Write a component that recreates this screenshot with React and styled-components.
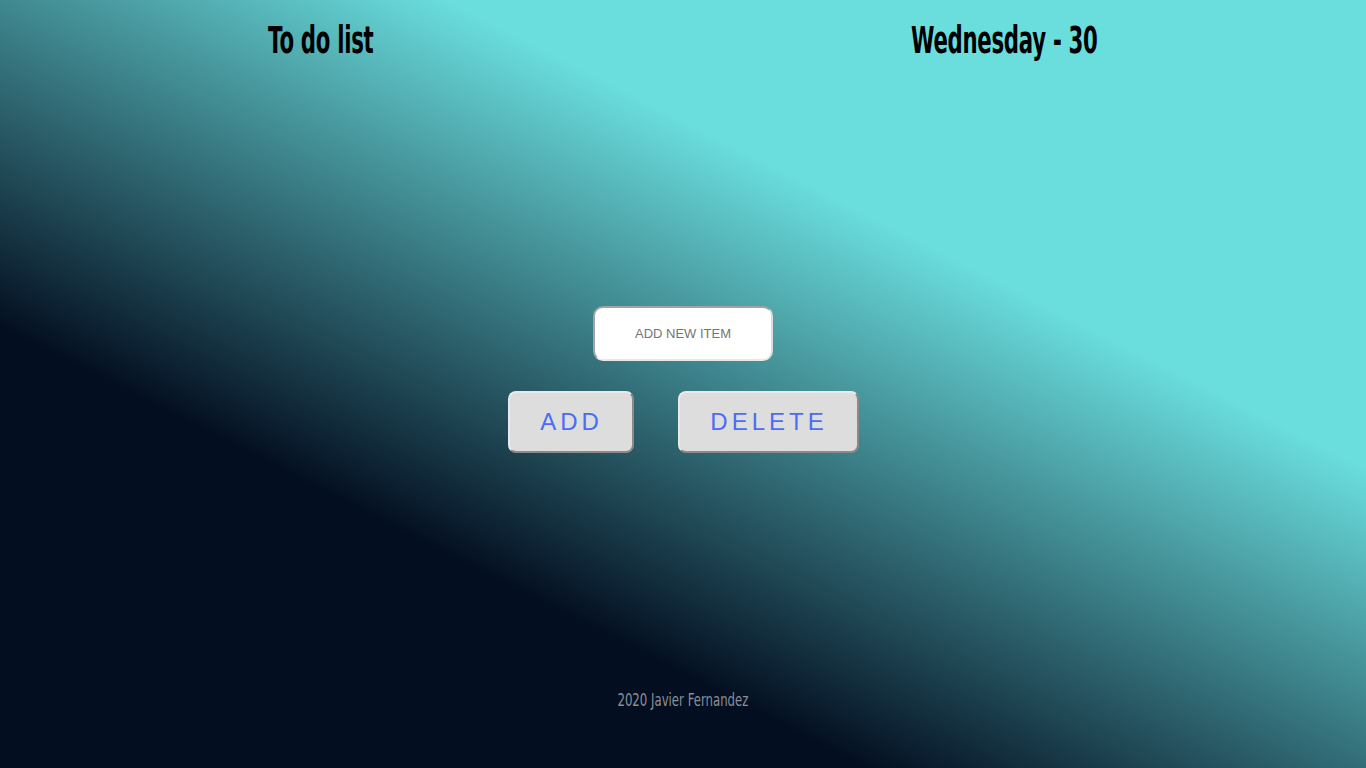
import React, { useState } from "react";
import styled, { createGlobalStyle } from "styled-components";

const GlobalStyle = createGlobalStyle`
  html, body {
    margin: 0;
    padding: 0;
  }
  body {
    min-height: 100vh;
    background: linear-gradient(27deg, #030e20 30%, #6adddd 68%);
    background-attachment: fixed;
    font-family: "Liberation Sans", Arial, sans-serif;
  }
`;

const Page = styled.div`
  height: 768px;
  display: flex;
  flex-direction: column;
`;

const Header = styled.header`
  display: grid;
  grid-template-columns: 642fr 724fr;
  justify-items: center;
  align-items: center;
  height: 80px;
`;

/* condensed look: no Oswald offline, so squeeze a bold sans */
const Title = styled.h1`
  display: inline-block;
  margin: 0;
  font-family: "DejaVu Sans", sans-serif;
  font-weight: 700;
  font-size: 37px;
  letter-spacing: -0.5px;
  color: #000;
  transform: scaleX(0.575);
`;

const Main = styled.main`
  flex: 1;
  display: flex;
  flex-direction: column;
  align-items: center;
  padding-top: 226px;
`;

const ItemInput = styled.input`
  width: 180px;
  height: 55px;
  box-sizing: border-box;
  border: 2px solid;
  border-color: #a3a3a3 #dcdcdc #e8e8e8 #a3a3a3;
  border-radius: 10px;
  background: #fff;
  text-align: center;
  font-family: "Liberation Sans", Arial, sans-serif;
  font-size: 13px;
  color: #333;
  outline: none;

  &::placeholder {
    color: #757575;
  }
`;

const Actions = styled.div`
  display: flex;
  gap: 44px;
  margin-top: 30px;
`;

const ActionButton = styled.button`
  width: ${(p) => p.$width}px;
  height: 62px;
  box-sizing: border-box;
  background: #dddddd;
  border: 2px solid;
  border-color: #e9e9e9 #8a8a8a #8a8a8a #e9e9e9;
  border-radius: 8px;
  font-family: "Liberation Sans", Arial, sans-serif;
  font-size: 24px;
  letter-spacing: 4px;
  color: #4a6cf7;
  padding: 0 0 0 2px;
  cursor: pointer;
`;

const Footer = styled.footer`
  height: 78px;
  display: flex;
  justify-content: center;
`;

const Credit = styled.span`
  display: inline-block;
  font-family: "DejaVu Sans", sans-serif;
  font-size: 17px;
  color: #8a8e98;
  transform: scaleX(0.69);
`;

export default function App() {
  const [value, setValue] = useState("");
  return (
    <>
      <GlobalStyle />
      <Page>
        <Header>
          <Title>To do list</Title>
          <Title>Wednesday - 30</Title>
        </Header>
        <Main>
          <ItemInput
            placeholder="ADD NEW ITEM"
            value={value}
            onChange={(e) => setValue(e.target.value)}
          />
          <Actions>
            <ActionButton $width={126}>ADD</ActionButton>
            <ActionButton $width={181}>DELETE</ActionButton>
          </Actions>
        </Main>
        <Footer>
          <Credit>2020 Javier Fernandez</Credit>
        </Footer>
      </Page>
    </>
  );
}
